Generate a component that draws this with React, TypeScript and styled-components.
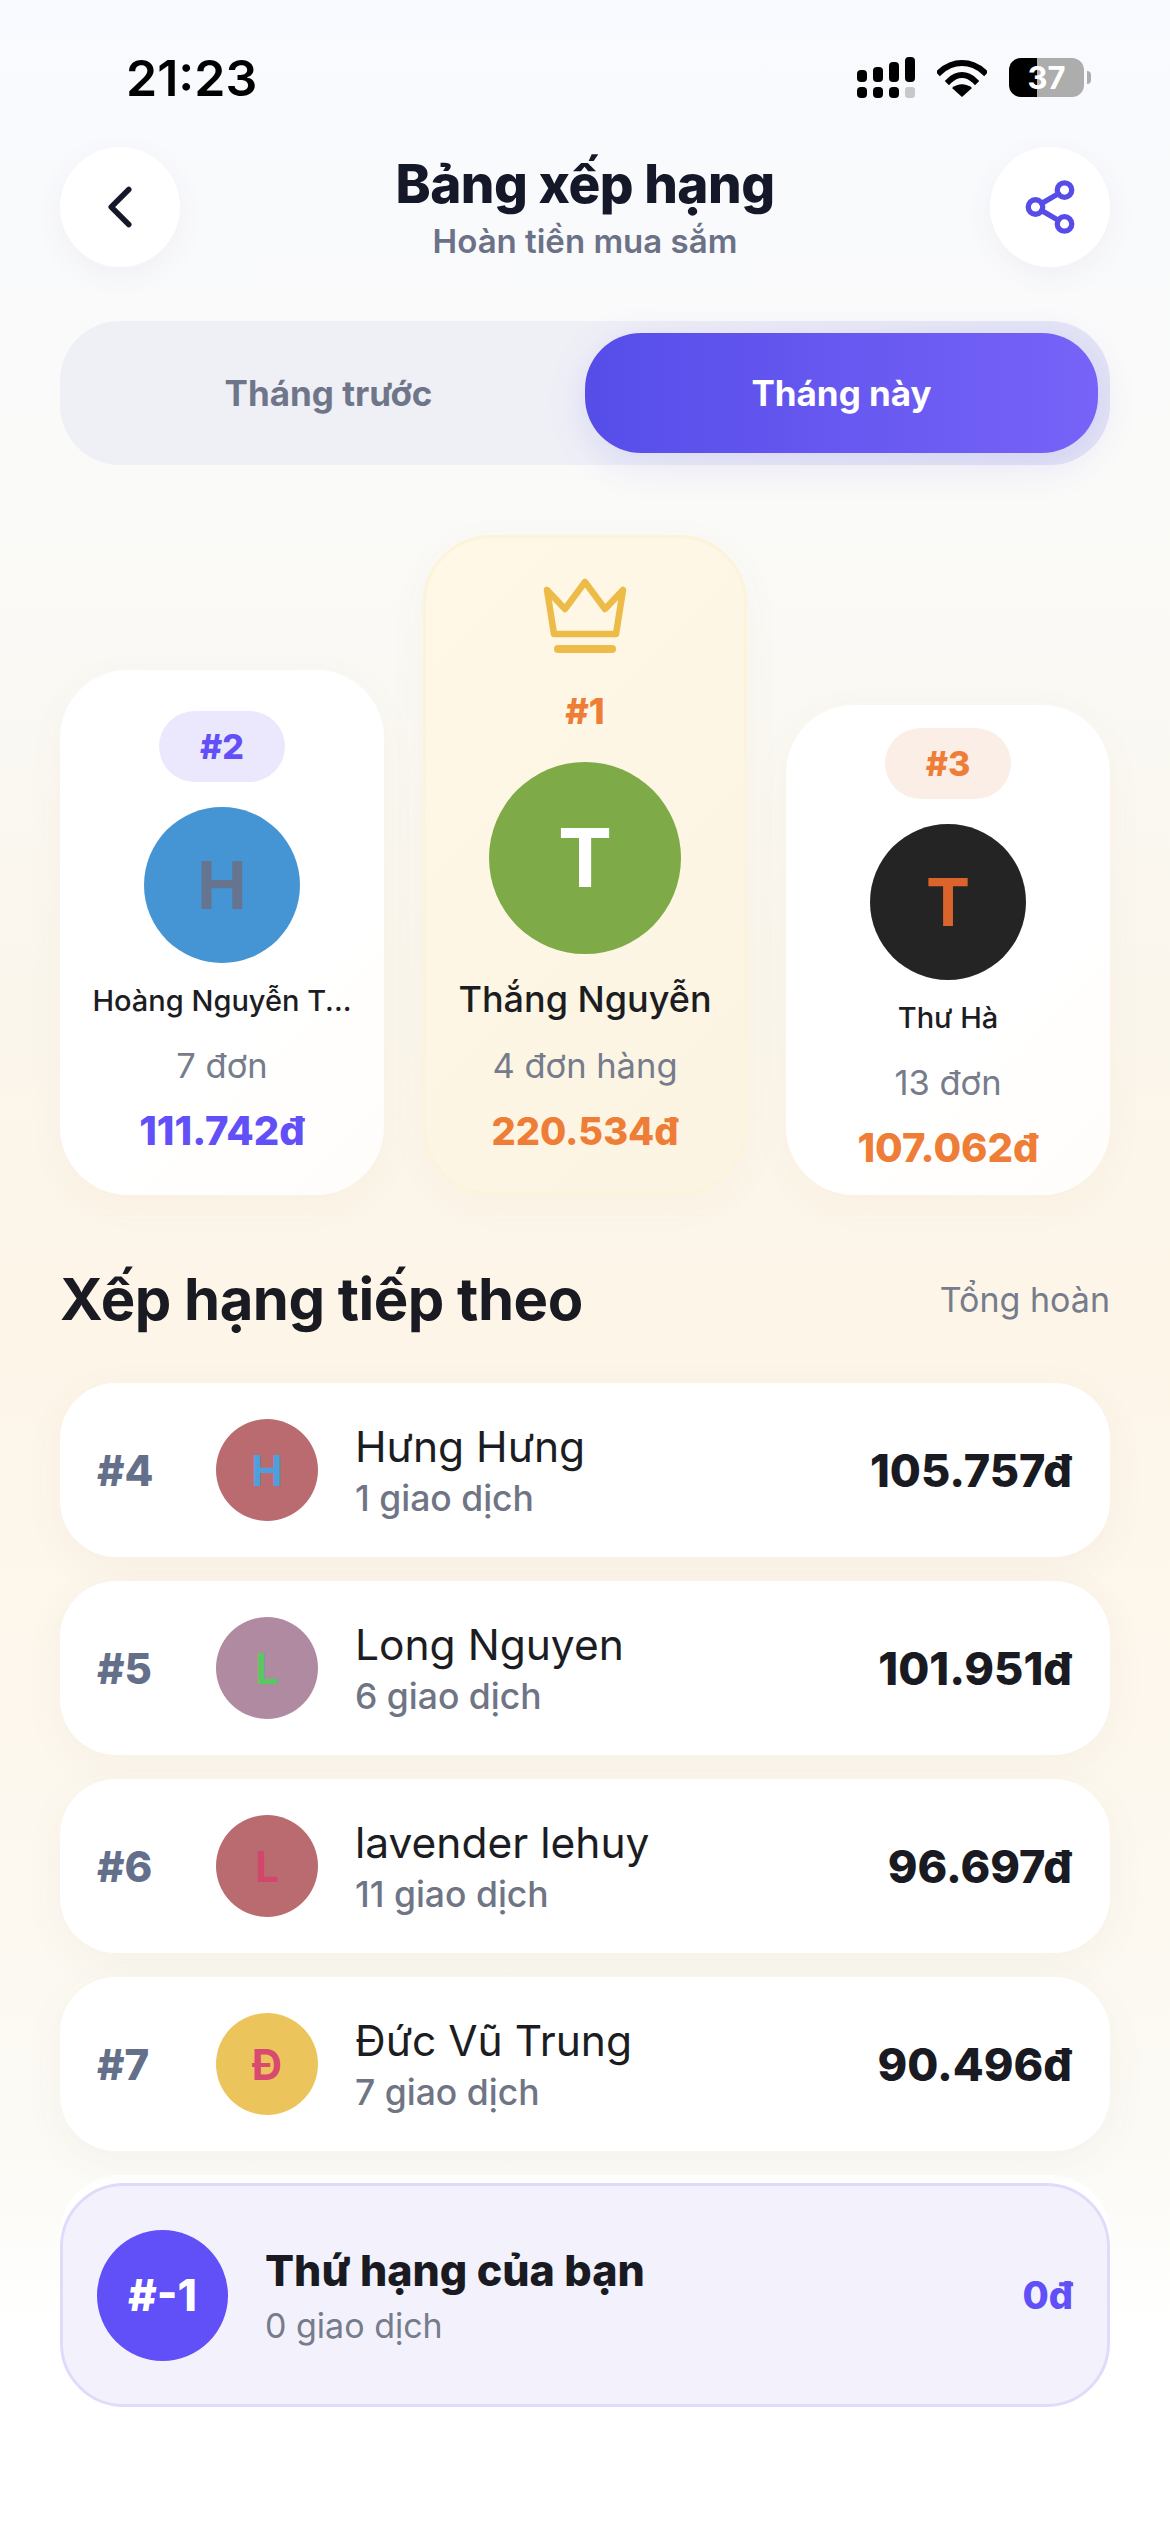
import styled, { createGlobalStyle } from 'styled-components'
import { ChevronLeft, Share2 } from 'lucide-react'

const GlobalStyle = createGlobalStyle`
  html, body {
    margin: 0;
    padding: 0;
  }

  body {
    font-family: Inter, "Noto Sans", "Liberation Sans", sans-serif;
    color: #1a1b22;
  }

  * {
    box-sizing: border-box;
  }
`

interface TopUser {
  rank: number
  name: string
  count: string
  amount: string
  avatar: string
  letter: string
}

interface RowUser {
  rank: number
  name: string
  count: string
  amount: string
  avatar: string
  letterColor: string
}

const second: TopUser = { rank: 2, name: 'Hoàng Nguyễn T...', count: '7 đơn', amount: '111.742đ', avatar: '#4595d4', letter: '#67748f' }
const third: TopUser = { rank: 3, name: 'Thư Hà', count: '13 đơn', amount: '107.062đ', avatar: '#242424', letter: '#db632c' }

const rows: RowUser[] = [
  { rank: 4, name: 'Hưng Hưng', count: '1 giao dịch', amount: '105.757đ', avatar: '#ba6b6f', letterColor: '#4f9fdc' },
  { rank: 5, name: 'Long Nguyen', count: '6 giao dịch', amount: '101.951đ', avatar: '#b08aa1', letterColor: '#5ac763' },
  { rank: 6, name: 'lavender lehuy', count: '11 giao dịch', amount: '96.697đ', avatar: '#ba6b6f', letterColor: '#d2466c' },
  { rank: 7, name: 'Đức Vũ Trung', count: '7 giao dịch', amount: '90.496đ', avatar: '#ecc45c', letterColor: '#d94a70' },
]

const Page = styled.div`
  width: 1170px;
  height: 2532px;
  padding: 0 60px;
  overflow: hidden;
  background: linear-gradient(180deg, #f9faff 0%, #fafaf8 20%, #fbf6ec 40%, #fdf5e8 52%, #fdf8ef 72%, #fbfaf5 85%, #ffffff 92%);
`

const StatusBar = styled.div`
  height: 147px;
  padding: 48px 26px 0 66px;
  display: flex;
  justify-content: space-between;
  align-items: flex-start;
`

const Time = styled.div`
  font-size: 50px;
  line-height: 60px;
  font-weight: 600;
  color: #000;
`

const StatusIcons = styled.div`
  display: flex;
  align-items: center;
  gap: 22px;
  margin-top: 9px;
`

const Battery = styled.div`
  position: relative;
  width: 75px;
  height: 39px;
  border-radius: 12px;
  background: linear-gradient(90deg, #000 37%, #adadad 37%);
  color: #fff;
  font-size: 31px;
  line-height: 39px;
  font-weight: 700;
  text-align: center;

  &::after {
    content: '';
    position: absolute;
    right: -7px;
    top: 13px;
    width: 4px;
    height: 13px;
    border-radius: 0 4px 4px 0;
    background: #adadad;
  }
`

const Header = styled.header`
  display: flex;
  align-items: center;
  justify-content: space-between;
  height: 120px;
`

const RoundButton = styled.button`
  width: 120px;
  height: 120px;
  padding: 0;
  border: 0;
  border-radius: 50%;
  display: flex;
  align-items: center;
  justify-content: center;
  background: #fff;
  box-shadow: 0 8px 30px rgba(90, 90, 130, 0.06);
`

const Titles = styled.div`
  display: flex;
  flex-direction: column;
  align-items: center;
`

const Title = styled.h1`
  margin: 0;
  font-size: 53px;
  line-height: 62px;
  font-weight: 800;
  letter-spacing: -0.5px;
  color: #141829;
`

const Subtitle = styled.div`
  margin-top: 6px;
  font-size: 33px;
  line-height: 40px;
  font-weight: 600;
  color: #6b7288;
`

const Tabs = styled.div`
  margin-top: 54px;
  height: 144px;
  padding: 12px;
  border-radius: 60px;
  display: grid;
  grid-template-columns: 1fr 513px;
  background: linear-gradient(90deg, #eff0f6 50%, #e4e4f5 100%);
`

const Tab = styled.div<{ $active?: boolean }>`
  display: flex;
  align-items: center;
  justify-content: center;
  border-radius: 56px;
  font-size: 35px;
  font-weight: 700;
  color: ${({ $active }) => ($active ? '#fff' : '#6f768a')};
  background: ${({ $active }) => ($active ? 'linear-gradient(90deg, #564de9 0%, #7763f8 100%)' : 'transparent')};
  box-shadow: ${({ $active }) => ($active ? '0 10px 40px rgba(86, 77, 233, 0.14)' : 'none')};
`

const Podium = styled.section`
  margin-top: 70px;
  display: grid;
  grid-template-columns: 324px 324px 324px;
  justify-content: space-between;
  align-items: end;
`

const PodiumCard = styled.div<{ $top: number; $bottom: number; $first?: boolean }>`
  padding: ${({ $top }) => $top}px 10px ${({ $bottom }) => $bottom}px;
  display: flex;
  flex-direction: column;
  align-items: center;
  border-radius: 68px;
  background: ${({ $first }) => ($first ? 'linear-gradient(135deg, #fff8e6 0%, #fcf4e2 100%)' : 'linear-gradient(135deg, #ffffff 60%, #fffdfa 100%)')};
  border: ${({ $first }) => ($first ? '3px solid #fbf3da' : '0')};
  box-shadow: 0 10px 40px rgba(120, 100, 60, 0.04);
`

const Crown = styled.svg`
  display: block;
  width: 84px;
  height: 76px;
`

const RankBadge = styled.div<{ $bg: string; $color: string }>`
  width: 126px;
  height: 71px;
  border-radius: 36px;
  display: flex;
  align-items: center;
  justify-content: center;
  font-size: 34px;
  font-weight: 800;
  background: ${({ $bg }) => $bg};
  color: ${({ $color }) => $color};
`

const FirstRank = styled.div`
  margin-top: 37px;
  font-size: 36px;
  line-height: 40px;
  font-weight: 800;
  color: #ee7d37;
`

const Avatar = styled.div<{ $size: number; $bg: string; $color: string; $font: number; $gap: number }>`
  flex: none;
  width: ${({ $size }) => $size}px;
  height: ${({ $size }) => $size}px;
  margin-top: ${({ $gap }) => $gap}px;
  border-radius: 50%;
  display: flex;
  align-items: center;
  justify-content: center;
  font-size: ${({ $font }) => $font}px;
  font-weight: 700;
  background: ${({ $bg }) => $bg};
  color: ${({ $color }) => $color};
`

const PodiumName = styled.div<{ $first?: boolean }>`
  margin-top: ${({ $first }) => ($first ? 21 : 18)}px;
  font-size: ${({ $first }) => ($first ? 36 : 29)}px;
  line-height: ${({ $first }) => ($first ? 48 : 40)}px;
  font-weight: 500;
  white-space: nowrap;
  color: #1c1d22;
`

const PodiumCount = styled.div<{ $first?: boolean }>`
  margin-top: ${({ $first }) => ($first ? 21 : 23)}px;
  font-size: 34.5px;
  line-height: 44px;
  font-weight: 400;
  color: #767c8c;
`

const PodiumAmount = styled.div<{ $color: string; $first?: boolean }>`
  margin-top: 20px;
  font-size: ${({ $first }) => ($first ? 38 : 40)}px;
  line-height: 46px;
  font-weight: 800;
  color: ${({ $color }) => $color};
`

const SectionHead = styled.div`
  margin-top: 70px;
  height: 68px;
  display: flex;
  align-items: center;
  justify-content: space-between;
`

const SectionTitle = styled.h2`
  margin: 0;
  font-size: 58px;
  font-weight: 700;
  letter-spacing: -0.5px;
  color: #1a1b22;
`

const SectionNote = styled.div`
  font-size: 34px;
  color: #767c8c;
`

const List = styled.div`
  margin-top: 50px;
  display: flex;
  flex-direction: column;
  gap: 24px;
`

const Row = styled.div`
  height: 174px;
  padding: 0 38px 0 37px;
  display: flex;
  align-items: center;
  border-radius: 56px;
  background: #fff;
  box-shadow: 0 10px 40px rgba(120, 100, 60, 0.05);
`

const RowRank = styled.div`
  width: 119px;
  font-size: 42px;
  font-weight: 800;
  color: #64708a;
`

const RowInfo = styled.div`
  flex: 1;
  margin-left: 37px;
  display: flex;
  flex-direction: column;
`

const RowName = styled.div`
  font-size: 42.5px;
  line-height: 52px;
  font-weight: 400;
  color: #1c1d22;
`

const RowCount = styled.div`
  margin-top: 5px;
  font-size: 35.5px;
  line-height: 42px;
  font-weight: 500;
  color: #6f7585;
`

const RowAmount = styled.div`
  font-size: 45px;
  font-weight: 800;
  color: #1a1b22;
`

const MeWrap = styled.div`
  margin-top: 24px;
  padding-top: 8px;
  border-radius: 60px;
  background: #fff;
`

const MeCard = styled.div`
  height: 224px;
  padding: 0 34px;
  display: flex;
  align-items: center;
  border: 3px solid #dfdcfb;
  border-radius: 64px;
  background: #f3f2fc;
`

const MeRank = styled.div`
  width: 131px;
  height: 131px;
  flex: none;
  border-radius: 50%;
  display: flex;
  align-items: center;
  justify-content: center;
  font-size: 44px;
  font-weight: 800;
  color: #fff;
  background: #614ff8;
`

const MeInfo = styled.div`
  flex: 1;
  margin-left: 37px;
`

const MeTitle = styled.div`
  font-size: 43px;
  line-height: 54px;
  font-weight: 800;
  color: #1a1b22;
`

const MeCount = styled.div`
  margin-top: 8px;
  font-size: 34px;
  line-height: 42px;
  font-weight: 400;
  color: #767c8c;
`

const MeAmount = styled.div`
  font-size: 38px;
  font-weight: 800;
  color: #614ff8;
`

const SignalIcon = () => (
  <svg width="58" height="41" viewBox="0 0 58 41">
    <rect x="0" y="13" width="10" height="12" rx="4" fill="#000" />
    <rect x="16" y="10" width="10" height="15" rx="4" fill="#000" />
    <rect x="32" y="5" width="10" height="20" rx="4" fill="#000" />
    <rect x="48" y="0" width="10" height="25" rx="4" fill="#000" />
    <rect x="0" y="30" width="10" height="11" rx="4" fill="#000" />
    <rect x="16" y="30" width="10" height="11" rx="4" fill="#000" />
    <rect x="32" y="30" width="10" height="11" rx="4" fill="#000" />
    <rect x="48" y="30" width="10" height="11" rx="3" fill="#c8c8c8" />
  </svg>
)

const WifiIcon = () => (
  <svg width="50" height="38" viewBox="0 0 50 38">
    <path d="M3 13 C16 1 34 1 47 13" fill="none" stroke="#000" strokeWidth="6" strokeLinecap="square" />
    <path d="M12 22 C20 14 30 14 38 22" fill="none" stroke="#000" strokeWidth="6" strokeLinecap="square" />
    <path d="M25 38 L15 29 C21 24 29 24 35 29 Z" fill="#000" />
  </svg>
)

const CrownIcon = () => (
  <Crown viewBox="0 0 84 76" fill="none" stroke="#edbb47" strokeWidth="6.5" strokeLinecap="round" strokeLinejoin="round">
    <path d="M4 12 L22 31 L42 4 L62 31 L80 12 L73 56 H11 Z" />
    <path d="M15 71 H69" strokeWidth="8" />
  </Crown>
)

const PodiumSide = ({ user, top, bottom, badge, color }: { user: TopUser; top: number; bottom: number; badge: string; color: string }) => (
  <PodiumCard $top={top} $bottom={bottom}>
    <RankBadge $bg={badge} $color={color}>#{user.rank}</RankBadge>
    <Avatar $size={156} $gap={25} $font={66} $bg={user.avatar} $color={user.letter}>{user.name[0]}</Avatar>
    <PodiumName>{user.name}</PodiumName>
    <PodiumCount>{user.count}</PodiumCount>
    <PodiumAmount $color={color}>{user.amount}</PodiumAmount>
  </PodiumCard>
)

export default function App() {
  return (
    <Page>
      <GlobalStyle />
      <StatusBar>
        <Time>21:23</Time>
        <StatusIcons>
          <SignalIcon />
          <WifiIcon />
          <Battery>37</Battery>
        </StatusIcons>
      </StatusBar>

      <Header>
        <RoundButton aria-label="Quay lại">
          <ChevronLeft size={70} color="#141829" strokeWidth={1.9} />
        </RoundButton>
        <Titles>
          <Title>Bảng xếp hạng</Title>
          <Subtitle>Hoàn tiền mua sắm</Subtitle>
        </Titles>
        <RoundButton aria-label="Chia sẻ">
          <Share2 size={58} color="#564de9" strokeWidth={2.2} />
        </RoundButton>
      </Header>

      <Tabs>
        <Tab>Tháng trước</Tab>
        <Tab $active>Tháng này</Tab>
      </Tabs>

      <Podium>
        <PodiumSide user={second} top={41} bottom={41} badge="#ebe8fd" color="#614ff8" />
        <PodiumCard $top={40} $bottom={38} $first>
          <CrownIcon />
          <FirstRank>#1</FirstRank>
          <Avatar $size={192} $gap={31} $font={81} $bg="#7eaa47" $color="#fff">T</Avatar>
          <PodiumName $first>Thắng Nguyễn</PodiumName>
          <PodiumCount $first>4 đơn hàng</PodiumCount>
          <PodiumAmount $color="#ee7d37" $first>220.534đ</PodiumAmount>
        </PodiumCard>
        <PodiumSide user={third} top={23} bottom={24} badge="#fbeee6" color="#ee7d37" />
      </Podium>

      <SectionHead>
        <SectionTitle>Xếp hạng tiếp theo</SectionTitle>
        <SectionNote>Tổng hoàn</SectionNote>
      </SectionHead>

      <List>
        {rows.map((row) => (
          <Row key={row.rank}>
            <RowRank>#{row.rank}</RowRank>
            <Avatar $size={102} $gap={0} $font={42} $bg={row.avatar} $color={row.letterColor}>{row.name[0].toUpperCase()}</Avatar>
            <RowInfo>
              <RowName>{row.name}</RowName>
              <RowCount>{row.count}</RowCount>
            </RowInfo>
            <RowAmount>{row.amount}</RowAmount>
          </Row>
        ))}
      </List>

      <MeWrap>
        <MeCard>
          <MeRank>#-1</MeRank>
          <MeInfo>
            <MeTitle>Thứ hạng của bạn</MeTitle>
            <MeCount>0 giao dịch</MeCount>
          </MeInfo>
          <MeAmount>0đ</MeAmount>
        </MeCard>
      </MeWrap>
    </Page>
  )
}
